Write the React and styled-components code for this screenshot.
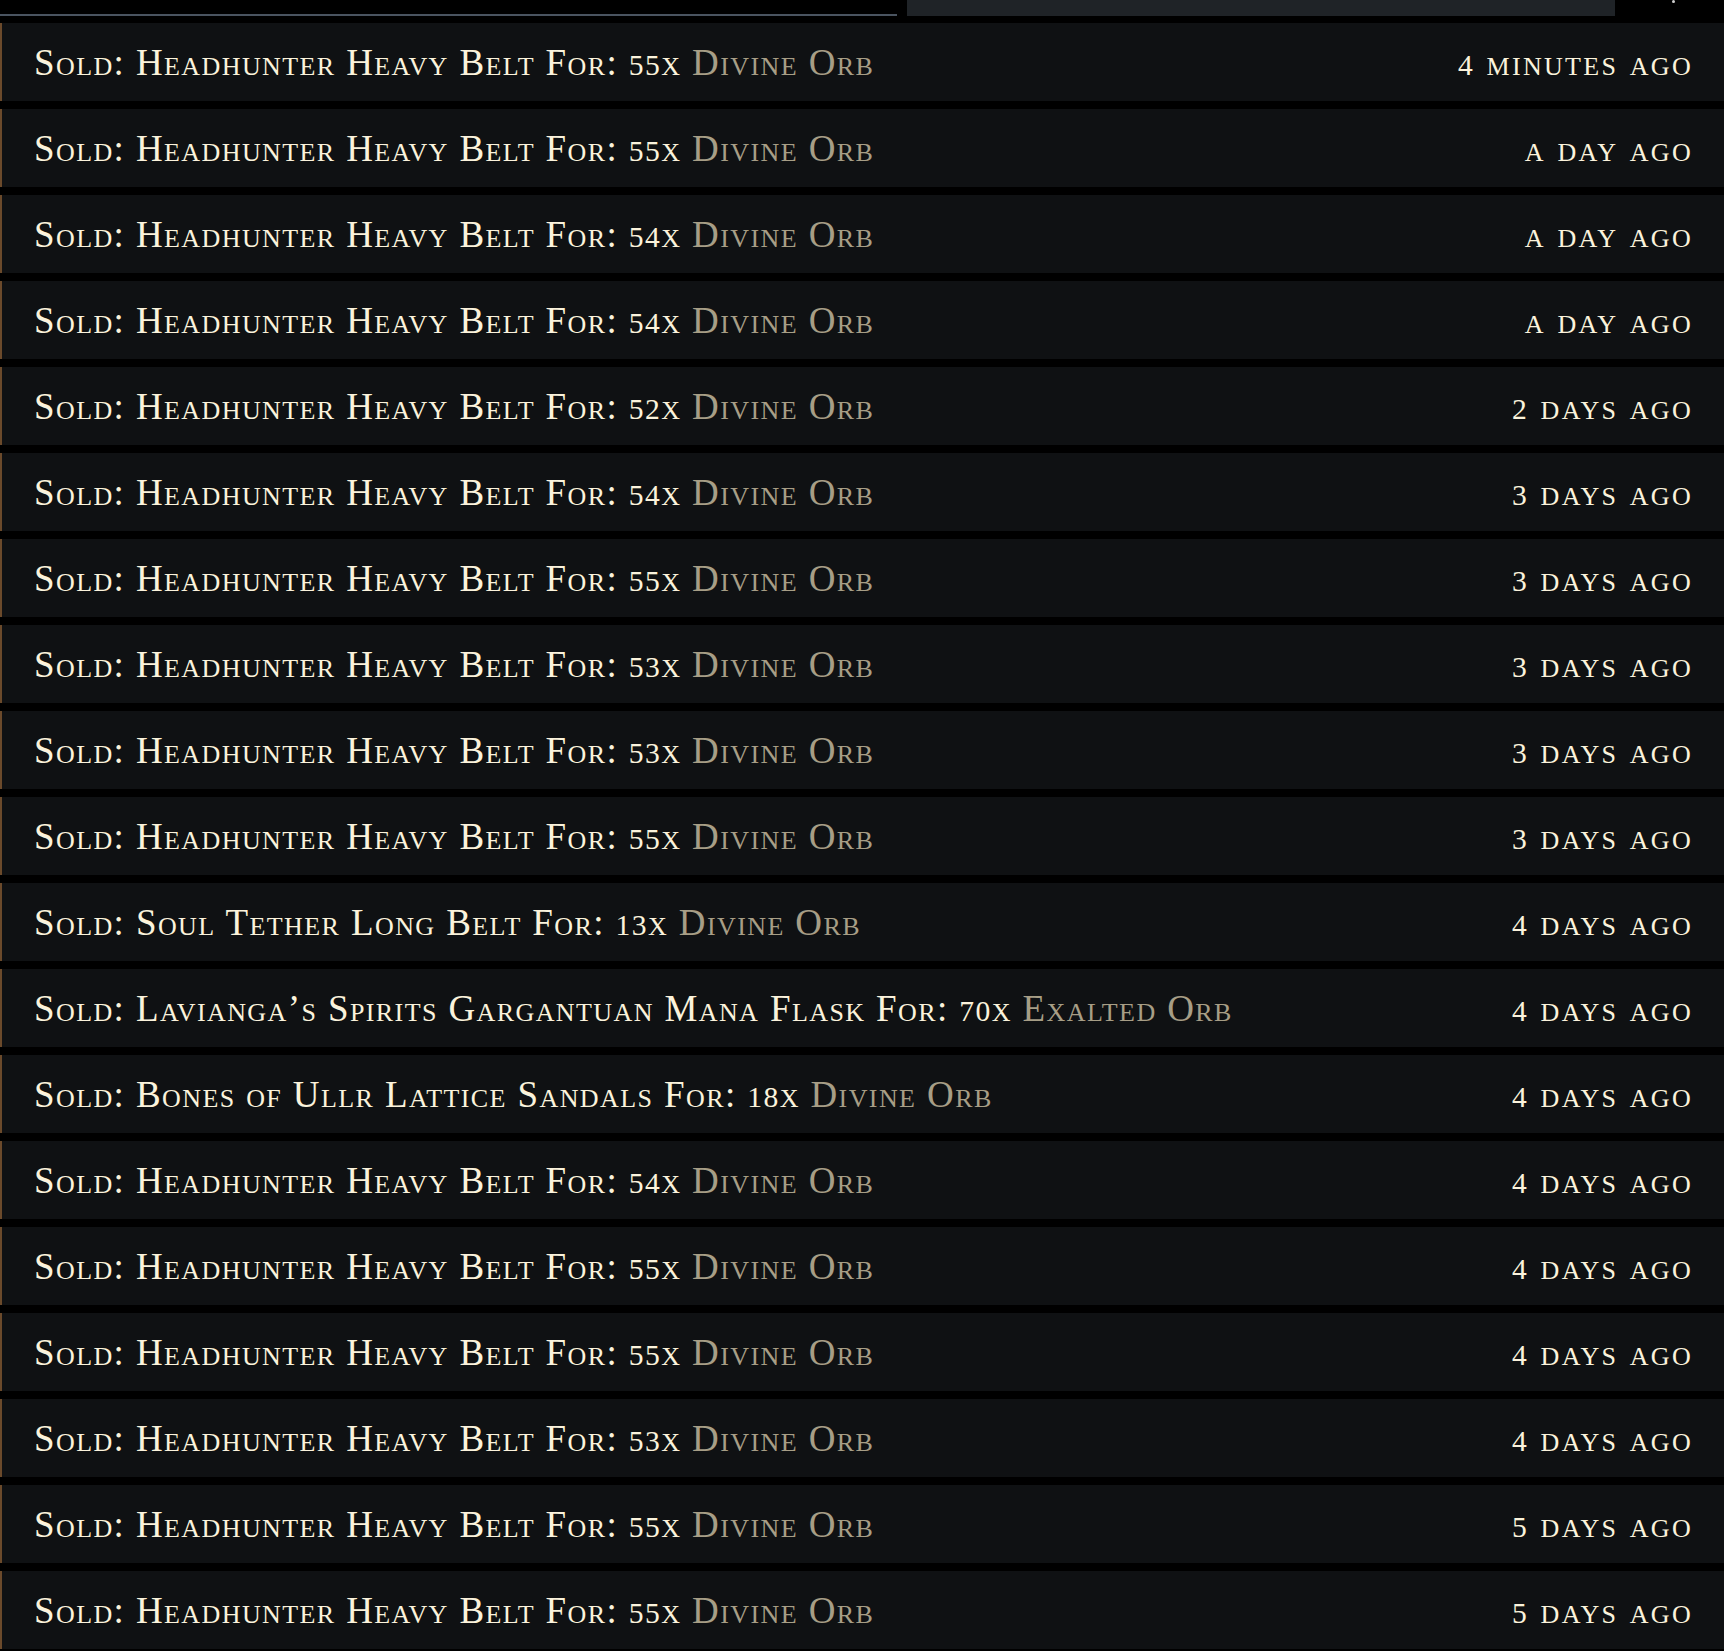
import React from 'react';
import styled, { createGlobalStyle } from 'styled-components';

const GlobalStyle = createGlobalStyle`
  html, body {
    margin: 0;
    padding: 0;
    background: #000;
  }
  * {
    box-sizing: border-box;
  }
`

const Page = styled.div`
  width: 1724px;
  height: 1651px;
  overflow: hidden;
  background: #000;
  font-family: "Liberation Serif", "DejaVu Serif", serif;
`
const TopBar = styled.div`
  display: flex;
  align-items: flex-start;
  height: 16px;
  margin-bottom: 7px;
`
const Tab = styled.div`
  width: 897px;
  height: 16px;
  border-bottom: 2px solid #4a5460;
`
const SearchBox = styled.div`
  margin-left: 10px;
  width: 708px;
  height: 16px;
  background: #1f2327;
`
const Spark = styled.div`
  position: relative;
  flex: 1;
  height: 16px;
  &::after {
    content: '';
    position: absolute;
    left: 57px;
    top: 0;
    width: 3px;
    height: 3px;
    border-radius: 50%;
    background: #cfcfcf;
  }
`
const List = styled.ul`
  margin: 0;
  padding: 0;
  list-style: none;
  display: flex;
  flex-direction: column;
  gap: 8px;
`
const Row = styled.li`
  height: 78px;
  display: flex;
  align-items: center;
  justify-content: space-between;
  padding: 0 31px 0 32px;
  background: #0f1113;
  border-left: 2px solid #6b4a2b;
  color: #fbf3dc;
  font-variant: small-caps;
  font-size: 37px;
`
const Sale = styled.span`
  letter-spacing: 1.4px;
  white-space: nowrap;
`
const Currency = styled.span`
  color: #a79e86;
`
const Time = styled.span`
  letter-spacing: 2.3px;
  white-space: nowrap;
`
// the game font uses old-style figures, about small-cap height
const Num = styled.span`
  font-size: 0.8em;
`

const withNums = (text) =>
  text.split(/(\d+)/).map((part, i) =>
    /^\d+$/.test(part) ? <Num key={i}>{part}</Num> : part
  )

const sales = [
  ['Headhunter Heavy Belt', '55x', 'Divine Orb', '4 minutes ago'],
  ['Headhunter Heavy Belt', '55x', 'Divine Orb', 'a day ago'],
  ['Headhunter Heavy Belt', '54x', 'Divine Orb', 'a day ago'],
  ['Headhunter Heavy Belt', '54x', 'Divine Orb', 'a day ago'],
  ['Headhunter Heavy Belt', '52x', 'Divine Orb', '2 days ago'],
  ['Headhunter Heavy Belt', '54x', 'Divine Orb', '3 days ago'],
  ['Headhunter Heavy Belt', '55x', 'Divine Orb', '3 days ago'],
  ['Headhunter Heavy Belt', '53x', 'Divine Orb', '3 days ago'],
  ['Headhunter Heavy Belt', '53x', 'Divine Orb', '3 days ago'],
  ['Headhunter Heavy Belt', '55x', 'Divine Orb', '3 days ago'],
  ['Soul Tether Long Belt', '13x', 'Divine Orb', '4 days ago'],
  ['Lavianga\u2019s Spirits Gargantuan Mana Flask', '70x', 'Exalted Orb', '4 days ago'],
  ['Bones of Ullr Lattice Sandals', '18x', 'Divine Orb', '4 days ago'],
  ['Headhunter Heavy Belt', '54x', 'Divine Orb', '4 days ago'],
  ['Headhunter Heavy Belt', '55x', 'Divine Orb', '4 days ago'],
  ['Headhunter Heavy Belt', '55x', 'Divine Orb', '4 days ago'],
  ['Headhunter Heavy Belt', '53x', 'Divine Orb', '4 days ago'],
  ['Headhunter Heavy Belt', '55x', 'Divine Orb', '5 days ago'],
  ['Headhunter Heavy Belt', '55x', 'Divine Orb', '5 days ago'],
]

const App = () => (
  <Page>
    <GlobalStyle />
    <TopBar>
      <Tab />
      <SearchBox />
      <Spark />
    </TopBar>
    <List>
      {sales.map(([item, amount, currency, time], i) => (
        <Row key={i}>
          <Sale>
            Sold: {item} For: {withNums(amount)} <Currency>{currency}</Currency>
          </Sale>
          <Time>{withNums(time)}</Time>
        </Row>
      ))}
    </List>
  </Page>
)

export default App;
